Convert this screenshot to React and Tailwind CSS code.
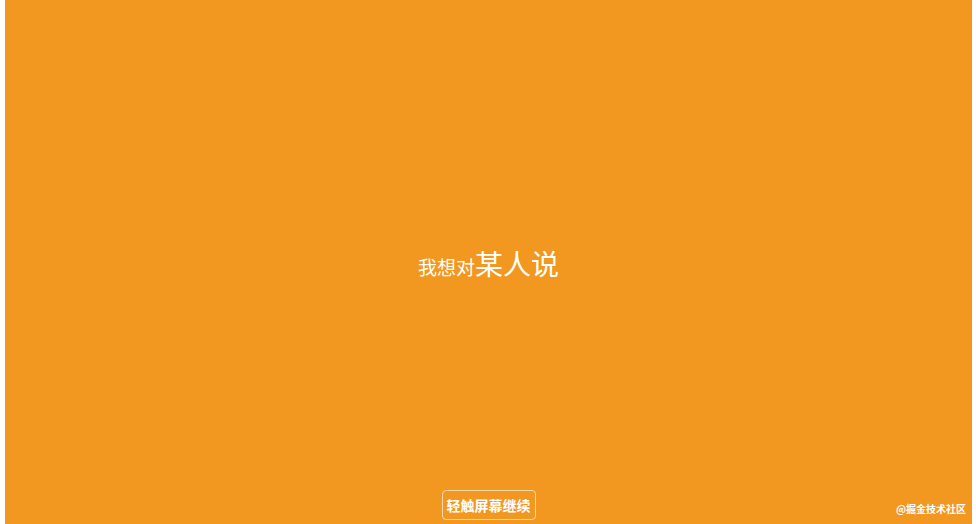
import React from 'react';

const font = { fontFamily: '"Noto Sans CJK SC", "Noto Sans", sans-serif' };

export default function App() {
    return (
        <div className="flex h-[524px] w-[976px] overflow-hidden bg-white" style={font}>
            <div className="w-[5px] shrink-0 bg-white" />
            <div className="relative flex flex-1 flex-col items-center bg-[#f2971f]">
                <div className="flex flex-1 items-center justify-center pt-[36px]">
                    <p className="flex items-baseline text-white">
                        <span className="text-[19px]">我想对</span>
                        <span className="text-[28px]">某人说</span>
                    </p>
                </div>
                <button className="mb-[4px] h-[30px] rounded-[4px] border border-[#f8d9a8] px-[4px] text-[14px] font-bold leading-none text-white">
                    轻触屏幕继续
                </button>
                {/* watermark */}
                <span className="absolute bottom-[8px] right-[6px] text-[10px] font-bold text-white">@掘金技术社区</span>
            </div>
            <div className="w-[4px] shrink-0 bg-white" />
        </div>
    );
}
